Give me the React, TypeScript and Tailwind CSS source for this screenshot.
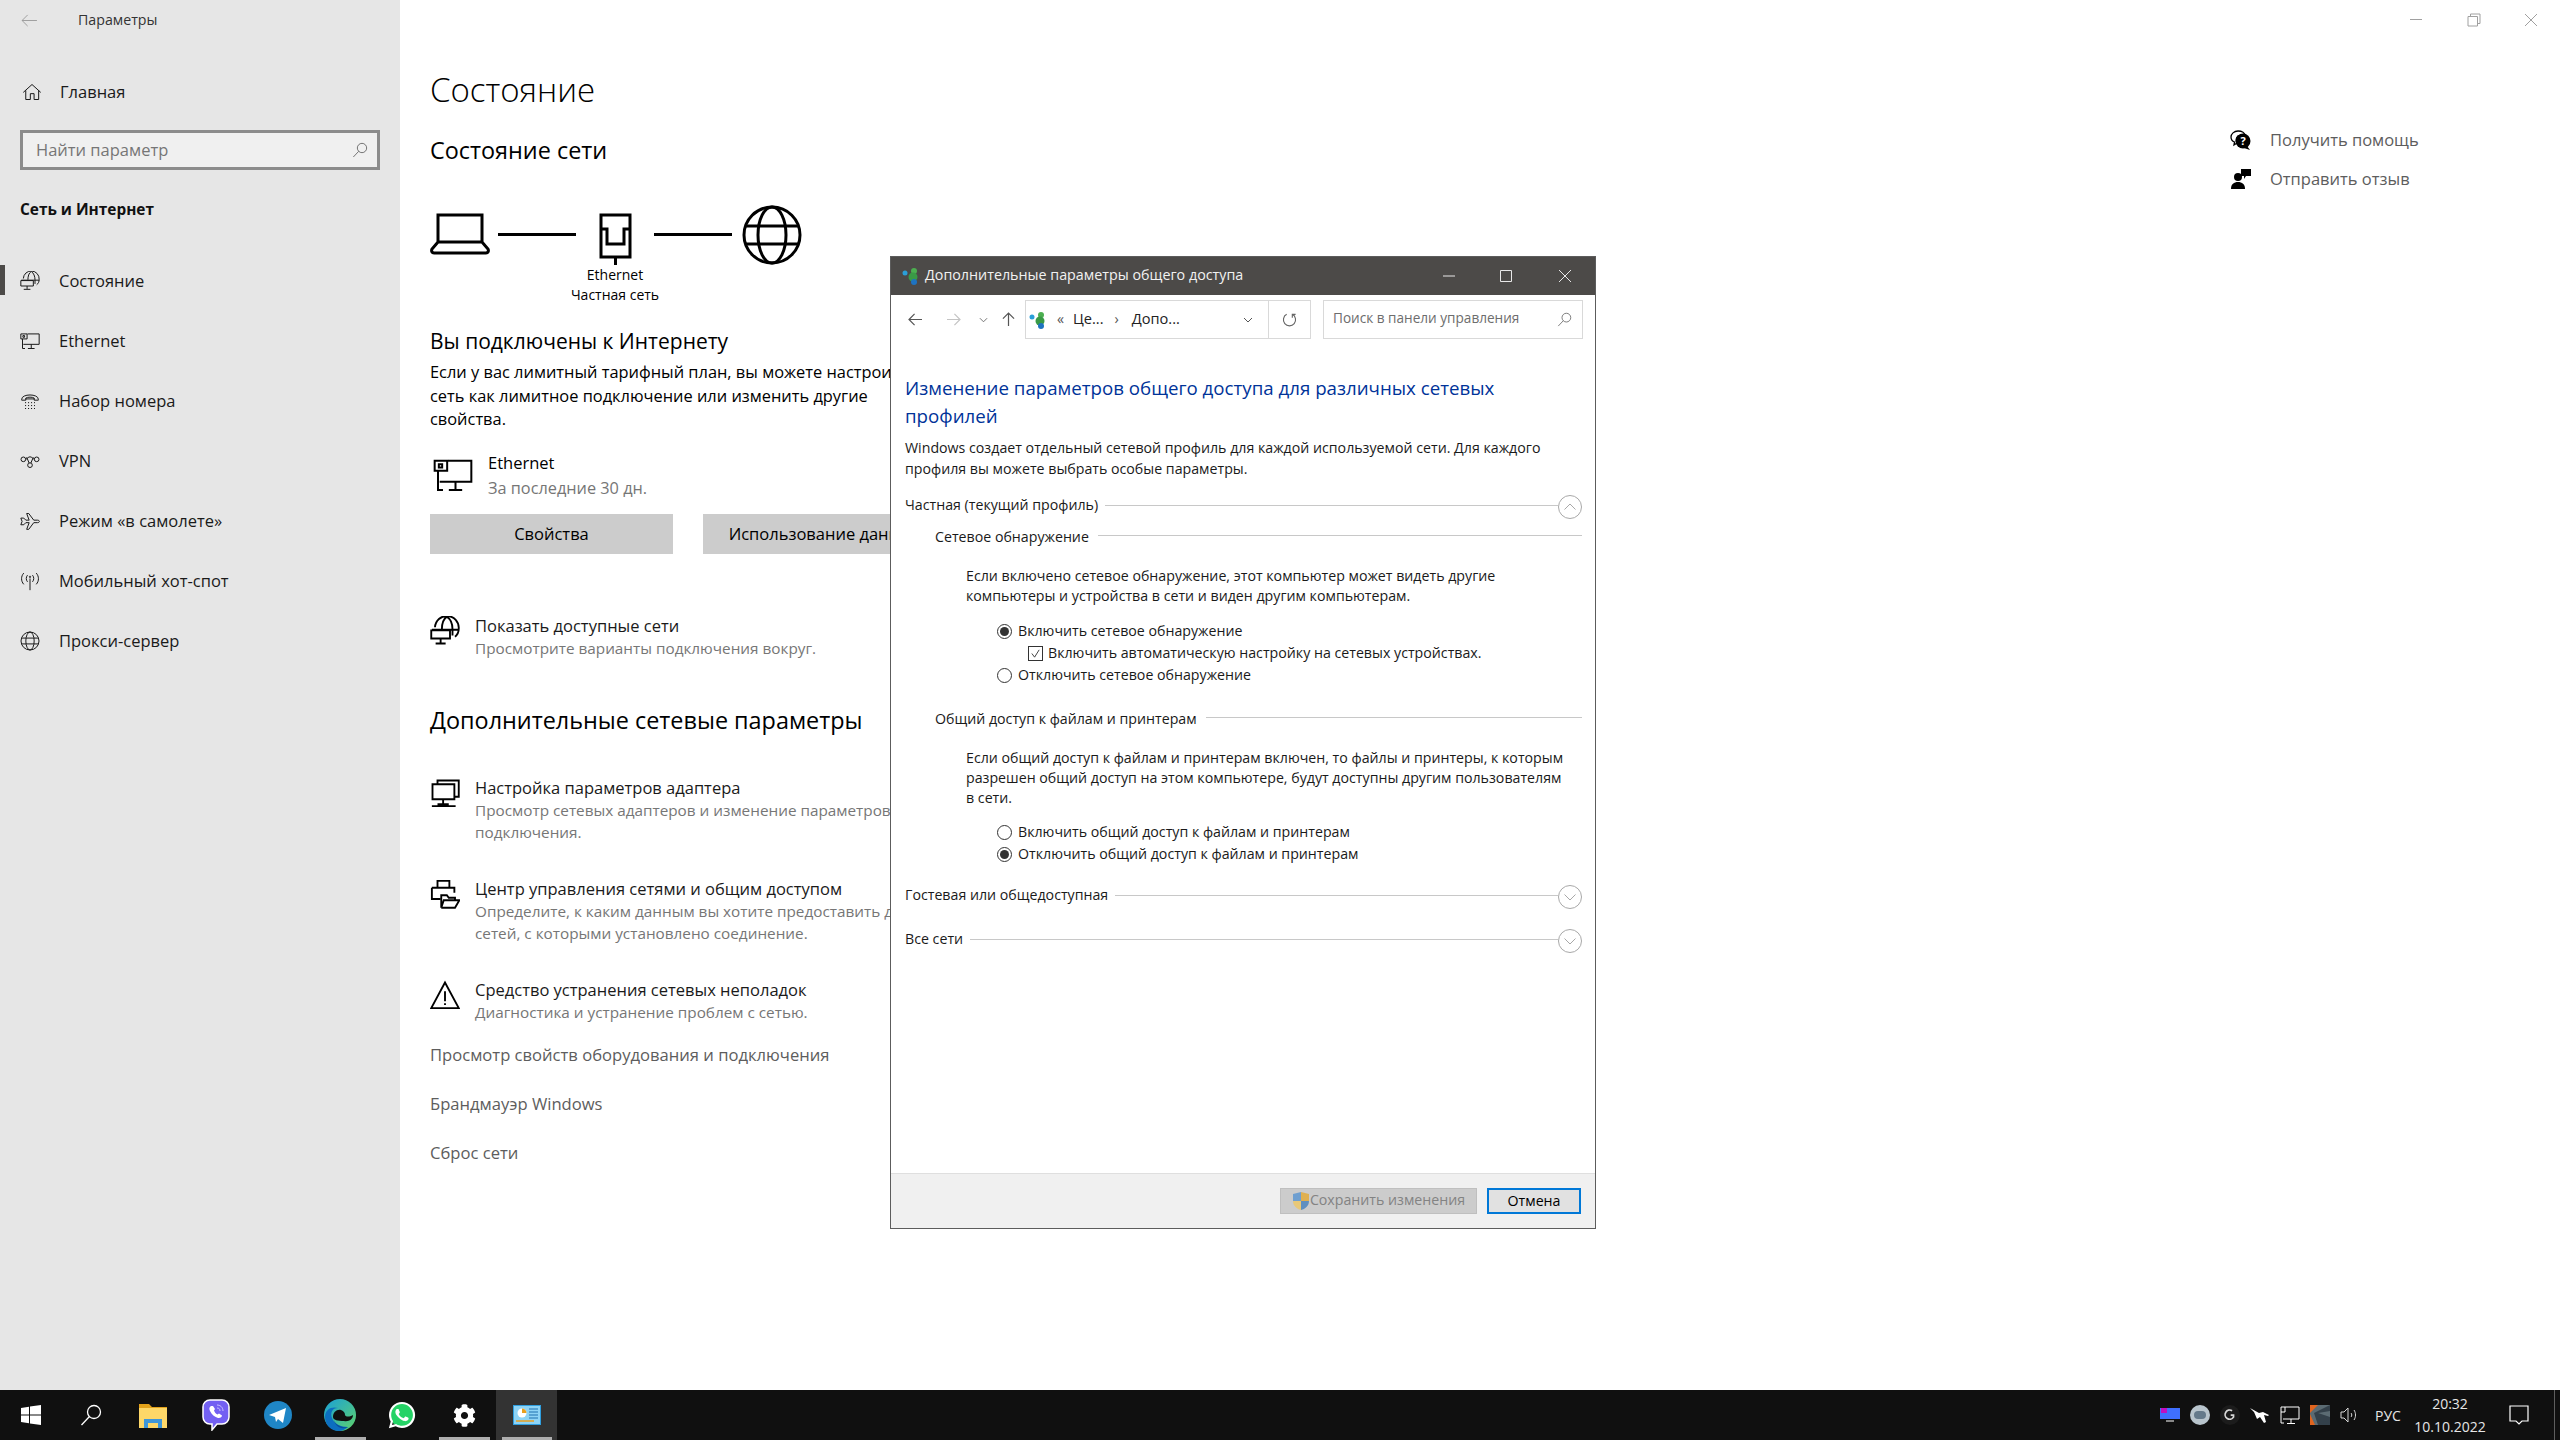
import { FaWhatsapp, FaCog } from "react-icons/fa";

type IconProps = { className?: string };

// sidebar and page glyphs, all drawn on a 24 grid with thin strokes
function Line({ className, children }: IconProps & { children: React.ReactNode }) {
  return (
    <svg viewBox="0 0 24 24" fill="none" stroke="currentColor" strokeWidth="1.2" className={className}>
      {children}
    </svg>
  );
}

const HomeIcon = (p: IconProps) => (
  <Line {...p}>
    <path d="M1.5 12.5 12 3l10.5 9.5M4.5 10v11h5.5v-7h4.5v7h5.5V10" />
  </Line>
);
const GlobeIcon = (p: IconProps) => (
  <Line {...p}>
    <circle cx="12" cy="12" r="10.8" />
    <ellipse cx="12" cy="12" rx="5" ry="10.8" />
    <path d="M1.8 8.5h20.4M1.8 15.5h20.4" />
  </Line>
);
const StatusIcon = (p: IconProps) => (
  <Line {...p}>
    <path d="M4 9a9.5 9.5 0 0 1 19 1c0 3-1 5-3 6.500M1.500 11h21.500M13.500 .5c-3 2-4 6-4 10M13.500 .5c3 2 4.500 6 4.500 10v5" />
    <path d="M1 11.500h15v6.500H1zM8.500 18v3.500M4.500 22h8" />
  </Line>
);
const EthernetIcon = (p: IconProps) => (
  <Line {...p}>
    <path d="M9 3.500h14v12.500H4M13.500 16v4.500M9.500 21h8M3 9.500V21h3" />
    <path d="M1 3.500h7.500v6H1zM3.500 5.500h2v2h-2z" />
  </Line>
);
const DialIcon = (p: IconProps) => (
  <Line {...p}>
    <path d="M2 10c0-7 20-7 20 0v1h-5V8.500c-2-1.500-8-1.500-10 0V11H2zM6.500 9.500h11" />
    <path strokeDasharray="1.300 2.300" d="M6 14h12M6 17.500h12M6 21h12" />
  </Line>
);
const VpnIcon = (p: IconProps) => (
  <Line {...p}>
    <circle cx="4" cy="10" r="2.800" />
    <circle cx="20" cy="10" r="2.800" />
    <circle cx="12" cy="17" r="2.800" />
    <path d="M6.800 10c2.500-1 3-3 5.200-3s3 2 5.400 3M11 14.500 8 7.500M13 14.500l3-7" />
  </Line>
);
const PlaneIcon = (p: IconProps) => (
  <Line {...p}>
    <path d="M1 8.500h3.500l2.500 2.500h4L8 3h2.500l6 8H21c3 0 3 3 0 3h-4.500l-6 8H8l3-8H7l-2.500 2.500H1l1.500-4z" />
  </Line>
);
const HotspotIcon = (p: IconProps) => (
  <Line {...p}>
    <path d="M12 9v14M9 5c-2 2.500-2 5.500 0 8M15 5c2 2.500 2 5.500 0 8M4.500 2.500c-3.500 4-3.500 9.500 0 13.500M19.500 2.500c3.500 4 3.500 9.500 0 13.500" />
    <circle cx="12" cy="7" r=".8" />
  </Line>
);
const AdapterIcon = (p: IconProps) => (
  <Line {...p}>
    <path d="M6 5V2h17v13h-3.500" />
    <path d="M2 5h17.500v12H2zM10.500 17v3.500M1.500 22.500h19M6 21h9" />
  </Line>
);
const ShareIcon = (p: IconProps) => (
  <Line {...p}>
    <path d="M6 7V1.500h9.500V7M1.500 7h18v4M1.500 7v9h7" />
    <path d="M9 13h4.500l1.500 2h5v2H11l-2 6zM9 23h11l3.500-6H20" />
  </Line>
);
const WarnIcon = (p: IconProps) => (
  <Line {...p}>
    <path d="M12 2 1 22.500h22z" />
    <path d="M12 9v8M12 18.500v1.500" strokeWidth="1.500" />
  </Line>
);
const SearchGlyph = (p: IconProps) => (
  <Line {...p}>
    <circle cx="15" cy="9" r="7" />
    <path d="M10 14 2 22.500" />
  </Line>
);

function ChevronCircle({ up }: { up?: boolean }) {
  return (
    <svg viewBox="0 0 24 24" fill="none" className="relative top-[2px] h-6 w-6 shrink-0 text-[#a8a8a8]" stroke="currentColor">
      <circle cx="12" cy="12" r="11.500" />
      <path d={up ? "M6.500 14.500 12 9l5.500 5.500" : "M6.500 9.500 12 15l5.500-5.500"} />
    </svg>
  );
}

function NetDots({ className }: IconProps) {
  return (
    <svg viewBox="0 0 18 18" className={className}>
      <circle cx="3" cy="6" r="2.500" fill="#2a9fd8" />
      <circle cx="12" cy="4" r="3" fill="#4caf50" />
      <circle cx="11" cy="10" r="4.500" fill="#3a9a46" />
      <circle cx="12" cy="15" r="3" fill="#1e73c0" />
    </svg>
  );
}

function SideRow({ icon, label, active }: { icon: React.ReactNode; label: string; active?: boolean }) {
  return (
    <div className="relative flex h-[60px] items-center pl-[20px] text-[16.5px] text-[#1a1a1a]">
      {active && <span className="absolute left-0 top-[14px] h-[30px] w-[5px] bg-[#4c4a48]" />}
      <span className="flex w-[39px] shrink-0">{icon}</span>
      <span className="pt-px">{label}</span>
    </div>
  );
}

function Sidebar() {
  const ic = "h-5 w-5 text-[#1a1a1a]";
  return (
    <aside className="flex w-[400px] shrink-0 flex-col bg-[#e6e6e6]">
      <div className="flex h-[40px] items-center pl-[21px] text-[14.2px] text-[#333]">
        <svg viewBox="0 0 18 14" fill="none" stroke="#9b9b9b" className="h-[13px] w-[17px]">
          <path d="M17 7H1M7 1 1 7l6 6" />
        </svg>
        <span className="ml-[40px]">Параметры</span>
      </div>
      <div className="mt-[22px] flex h-[60px] items-center pl-[22px] text-[16.5px] text-[#1a1a1a]">
        <span className="flex w-[38px] shrink-0"><HomeIcon className={ic} /></span>
        Главная
      </div>
      <div className="mx-5 mt-[8px] flex h-[40px] items-center justify-between border-[3px] border-[#8c8c8c] bg-[#f0f0f0] pl-[13px] pr-[9px] text-[16.5px] text-[#767676]">
        Найти параметр
        <SearchGlyph className="h-[16px] w-[16px] text-[#555]" />
      </div>
      <div className="mt-[22px] flex h-[34px] items-center pl-5 pt-px text-[15.4px] font-bold text-[#111]">Сеть и Интернет</div>
      <div className="mt-[25px]">
        <SideRow active label="Состояние" icon={<StatusIcon className={ic} />} />
        <SideRow label="Ethernet" icon={<EthernetIcon className={ic} />} />
        <SideRow label="Набор номера" icon={<DialIcon className={ic} />} />
        <SideRow label="VPN" icon={<VpnIcon className={ic} />} />
        <SideRow label="Режим «в самолете»" icon={<PlaneIcon className={ic} />} />
        <SideRow label="Мобильный хот-спот" icon={<HotspotIcon className={ic} />} />
        <SideRow label="Прокси-сервер" icon={<GlobeIcon className={ic} />} />
      </div>
    </aside>
  );
}

function OptionRow({ icon, title, lines, className }: { icon: React.ReactNode; title: string; lines: string[]; className: string }) {
  return (
    <div className={`flex ${className}`}>
      <span className="flex w-[45px] shrink-0 pt-[2px] text-black">{icon}</span>
      <div className="whitespace-nowrap">
        <div className="flex h-[24px] items-center pt-px text-[16.5px] text-[#1a1a1a]">{title}</div>
        {lines.map((l) => (
          <div key={l} className="flex h-[22px] items-center text-[15.3px] text-[#767676]">{l}</div>
        ))}
      </div>
    </div>
  );
}

function StatusColumn() {
  const big = "h-[30px] w-[30px] [stroke-width:1.5]";
  return (
    <div className="pl-[30px] text-black">
      <h1 className="mt-[26px] flex h-[48px] items-center text-[33px] font-light">Состояние</h1>
      <h2 className="mt-[19px] flex h-[34px] items-center pt-px text-[23.4px]">Состояние сети</h2>

      <div className="mt-[38px] flex h-[101px] items-start">
        <svg viewBox="0 0 60 42" fill="none" stroke="black" strokeWidth="3" className="mt-2 h-[42px] w-[60px]">
          <path d="M8 29V2h44v27M8 29 2 36c-1 2 0 4 2 4h52c2 0 3-2 2-4l-6-7z" />
        </svg>
        <span className="ml-2 mt-[28px] h-[3px] w-[78px] bg-black" />
        <div className="flex w-[78px] flex-col items-center whitespace-nowrap text-[14px] leading-[20px]">
          <svg viewBox="0 0 33 52" fill="none" stroke="black" strokeWidth="3" className="mt-2 h-[52px] w-[33px]">
            <path d="M2 2h29v42H2zM2 16h6v15h17V16h6M16.500 44v8" />
          </svg>
          <span>Ethernet</span>
          <span>Частная сеть</span>
        </div>
        <span className="mt-[28px] h-[3px] w-[78px] bg-black" />
        <svg viewBox="0 0 60 60" fill="none" stroke="black" strokeWidth="3" className="ml-[10px] h-[60px] w-[60px]">
          <circle cx="30" cy="30" r="28" />
          <ellipse cx="30" cy="30" rx="14" ry="28" />
          <path d="M4 21h52M4 39h52" />
        </svg>
      </div>

      <h3 className="mt-[21px] flex h-[30px] items-center text-[21px]">Вы подключены к Интернету</h3>
      <p className="mt-[3px] whitespace-nowrap text-[16.4px] leading-[23.5px]">
        Если у вас лимитный тарифный план, вы можете настроить эту
        <br />
        сеть как лимитное подключение или изменить другие
        <br />
        свойства.
      </p>

      <div className="mt-[20px] flex">
        <EthernetIcon className="ml-[3px] mt-[4px] h-[40px] w-[40px] text-black" />
        <div className="ml-[15px]">
          <div className="flex h-[24px] items-center pt-px text-[16.5px]">Ethernet</div>
          <div className="flex h-[26px] items-center pt-[2px] text-[16.3px] text-[#767676]">За последние 30 дн.</div>
        </div>
      </div>

      <div className="mt-[13px] flex gap-[30px] text-[16.5px]">
        <button className="h-[40px] w-[243px] bg-[#cccccc] pt-[2px]">Свойства</button>
        <button className="h-[40px] w-[243px] bg-[#cccccc] pt-[2px]">Использование данных</button>
      </div>

      <OptionRow className="mt-[60px]" icon={<StatusIcon className={big} />} title="Показать доступные сети" lines={["Просмотрите варианты подключения вокруг."]} />

      <h2 className="mt-[44px] flex h-[34px] items-center text-[23.4px]">Дополнительные сетевые параметры</h2>

      <OptionRow className="mt-[38px]" icon={<AdapterIcon className={big} />} title="Настройка параметров адаптера" lines={["Просмотр сетевых адаптеров и изменение параметров", "подключения."]} />
      <OptionRow className="mt-[33px]" icon={<ShareIcon className={big} />} title="Центр управления сетями и общим доступом" lines={["Определите, к каким данным вы хотите предоставить доступ для", "сетей, с которыми установлено соединение."]} />
      <OptionRow className="mt-[33px]" icon={<WarnIcon className={big} />} title="Средство устранения сетевых неполадок" lines={["Диагностика и устранение проблем с сетью."]} />

      <div className="mt-[19px] flex flex-col gap-[25px] text-[16.6px] text-[#5d5d5d]">
        <span className="h-[24px] leading-[24px]">Просмотр свойств оборудования и подключения</span>
        <span className="h-[24px] leading-[24px]">Брандмауэр Windows</span>
        <span className="h-[24px] leading-[24px]">Сброс сети</span>
      </div>
    </div>
  );
}

function HelpColumn() {
  return (
    <div className="w-[330px] pt-[88px] text-[16.5px] text-[#5d5d5d]">
      <div className="flex h-[24px] items-center">
        <svg viewBox="0 0 22 22" className="h-[22px] w-[22px]">
          <path d="M8 2c4 0 7 2 7 5H8c-2 2-2 5-1 7l-3 2 .500-3C2 12 1 10 1 8c0-3 3-6 7-6z" fill="none" stroke="black" strokeWidth="1.300" />
          <circle cx="13" cy="12" r="7.500" fill="black" />
          <path d="m17 17 3 4-6-2z" fill="black" />
          <text x="13" y="16" textAnchor="middle" fontSize="11" fontWeight="700" fill="white">?</text>
        </svg>
        <span className="ml-[18px]">Получить помощь</span>
      </div>
      <div className="mt-[15px] flex h-[24px] items-center">
        <svg viewBox="0 0 22 22" className="h-[22px] w-[22px]">
          <circle cx="8" cy="9" r="4" fill="black" />
          <path d="M1 21c0-5 3-7 7-7s7 2 7 7z" fill="black" />
          <path d="M11 1h10v7h-5l-2 3V8h-3z" fill="black" />
        </svg>
        <span className="ml-[18px]">Отправить отзыв</span>
      </div>
    </div>
  );
}

function Radio({ on }: { on?: boolean }) {
  return (
    <span className="flex h-[15px] w-[15px] shrink-0 items-center justify-center rounded-full border border-[#333]">
      {on && <span className="h-[9px] w-[9px] rounded-full bg-[#333]" />}
    </span>
  );
}

function RadioRow({ on, label }: { on?: boolean; label: string }) {
  return (
    <div className="ml-[92px] flex h-[22px] items-center gap-[6px]">
      <Radio on={on} />
      {label}
    </div>
  );
}

function SectionRow({ label, up, className }: { label: string; up?: boolean; className: string }) {
  return (
    <div className={`flex h-[24px] items-center ${className}`}>
      {label}
      <span className="ml-[7px] h-px flex-1 bg-[#c8c8c8]" />
      <ChevronCircle up={up} />
    </div>
  );
}

function SubHead({ label, className }: { label: string; className: string }) {
  return (
    <div className={`ml-[30px] flex h-[20px] items-center ${className}`}>
      {label}
      <span className="relative top-[-2px] ml-[9px] h-px flex-1 bg-[#c8c8c8]" />
    </div>
  );
}

function SharingDialog() {
  return (
    <div className="absolute left-[490px] top-[256px] flex h-[973px] w-[706px] flex-col border border-[#5c5c5c] bg-white text-[14.2px] text-[#1a1a1a]">
      <div className="flex h-[38px] shrink-0 items-center bg-[#4c4a48] pl-[11px] text-[14.3px] text-[#f2f2f2]">
        <NetDots className="h-[18px] w-[18px]" />
        <span className="ml-[5px] flex-1 pb-[2px]">Дополнительные параметры общего доступа</span>
        <svg viewBox="0 0 16 16" fill="none" stroke="#e8e8e8" className="mr-[41px] h-[16px] w-[16px]"><path d="M2 8h12" /></svg>
        <svg viewBox="0 0 16 16" fill="none" stroke="#e8e8e8" className="mr-[43px] h-[16px] w-[16px]"><path d="M2.500 2.500h11v11h-11z" /></svg>
        <svg viewBox="0 0 16 16" fill="none" stroke="#e8e8e8" className="mr-[22px] h-[16px] w-[16px]"><path d="m2 2 12 12M14 2 2 14" /></svg>
      </div>

      <div className="flex h-[49px] shrink-0 items-center pl-[5px]">
        <span className="flex w-[38px] justify-center">
          <svg viewBox="0 0 16 14" fill="none" stroke="#555" strokeWidth="1.300" className="h-[13px] w-[15px]"><path d="M15 7H1M7 1 1 7l6 6" /></svg>
        </span>
        <span className="flex w-[39px] justify-center">
          <svg viewBox="0 0 16 14" fill="none" stroke="#c4c4c4" strokeWidth="1.300" className="h-[13px] w-[15px]"><path d="M1 7h14M9 1l6 6-6 6" /></svg>
        </span>
        <span className="flex w-[20px] justify-center">
          <svg viewBox="0 0 10 6" fill="none" stroke="#666" className="h-[6px] w-[9px]"><path d="m1 1 4 4 4-4" /></svg>
        </span>
        <span className="flex w-[28px] justify-center pl-[2px]">
          <svg viewBox="0 0 14 16" fill="none" stroke="#555" strokeWidth="1.300" className="h-[15px] w-[13px]"><path d="M7 15V1M1 7l6-6 6 6" /></svg>
        </span>
        <div className="ml-[4px] flex h-[39px] w-[286px] items-center border border-[#d9d9d9] pl-[3px] text-[#222]">
          <NetDots className="h-[18px] w-[18px]" />
          <span className="ml-[10px] pb-[2px] text-[#555]">«</span>
          <span className="ml-[9px] pb-[2px] text-[14.6px]">Це...</span>
          <span className="ml-[11px] pb-[2px] text-[#555]">›</span>
          <span className="ml-[13px] pb-[2px] text-[14.6px]">Допо...</span>
          <svg viewBox="0 0 10 6" fill="none" stroke="#555" className="ml-auto mr-[15px] h-[6px] w-[10px]"><path d="m1 1 4 4 4-4" /></svg>
          <span className="flex h-full w-[42px] items-center justify-center border-l border-[#d9d9d9]">
            <svg viewBox="0 0 16 16" fill="none" stroke="#666" strokeWidth="1.200" className="h-[15px] w-[15px]">
              <path d="M11 2.500a6.500 6.500 0 1 1-6 0M11 6V2.500h3.500" />
            </svg>
          </span>
        </div>
        <div className="ml-[12px] flex h-[39px] w-[260px] items-center justify-between border border-[#d9d9d9] pl-[9px] pr-[10px] text-[13.6px] text-[#6d6d6d]">
          <span className="pb-[2px]">Поиск в панели управления</span>
          <SearchGlyph className="h-[15px] w-[15px] text-[#555]" />
        </div>
      </div>

      <div className="flex-1 pl-[14px] pr-[13px]">
        <h1 className="mt-[30px] text-[18.7px] leading-[28px] text-[#003399]">
          Изменение параметров общего доступа для различных сетевых
          <br />
          профилей
        </h1>
        <p className="mt-[7px] leading-[21px]">
          Windows создает отдельный сетевой профиль для каждой используемой сети. Для каждого
          <br />
          профиля вы можете выбрать особые параметры.
        </p>

        <SectionRow className="mt-[14px]" up label="Частная (текущий профиль)" />
        <SubHead className="mt-[10px]" label="Сетевое обнаружение" />
        <p className="ml-[61px] mt-[19px] leading-[20px]">
          Если включено сетевое обнаружение, этот компьютер может видеть другие
          <br />
          компьютеры и устройства в сети и виден другим компьютерам.
        </p>
        <div className="mt-[14px]">
          <RadioRow on label="Включить сетевое обнаружение" />
          <div className="ml-[123px] flex h-[22px] items-center gap-[5px]">
            <span className="flex h-[15px] w-[15px] shrink-0 items-center justify-center border border-[#333]">
              <svg viewBox="0 0 12 12" fill="none" stroke="#333" className="h-[11px] w-[11px]"><path d="m2 6 3 4 5-8" /></svg>
            </span>
            Включить автоматическую настройку на сетевых устройствах.
          </div>
          <RadioRow label="Отключить сетевое обнаружение" />
        </div>

        <SubHead className="mt-[23px]" label="Общий доступ к файлам и принтерам" />
        <p className="ml-[61px] mt-[19px] leading-[20px]">
          Если общий доступ к файлам и принтерам включен, то файлы и принтеры, к которым
          <br />
          разрешен общий доступ на этом компьютере, будут доступны другим пользователям
          <br />в сети.
        </p>
        <div className="mt-[13px]">
          <RadioRow label="Включить общий доступ к файлам и принтерам" />
          <RadioRow on label="Отключить общий доступ к файлам и принтерам" />
        </div>

        <SectionRow className="mt-[18px]" label="Гостевая или общедоступная" />
        <SectionRow className="mt-[20px]" label="Все сети" />
      </div>

      <div className="flex h-[55px] shrink-0 items-center justify-end gap-[10px] border-t border-[#dfdfdf] bg-[#f0f0f0] pr-[14px]">
        <button className="flex h-[26px] w-[197px] items-center justify-center border border-[#bfbfbf] bg-[#cccccc] text-[#838383]">
          <svg viewBox="0 0 18 20" className="h-[20px] w-[18px]">
            <path d="M9 1 1 3v7h8z" fill="#6f9fd0" />
            <path d="M9 1l8 2v7H9z" fill="#e0b050" />
            <path d="M1 10h8v9c-4-1-8-4-8-9z" fill="#e8c878" />
            <path d="M9 10h8c0 5-4 8-8 9z" fill="#5f8fc0" />
          </svg>
          <span className="pb-[2px]">Сохранить изменения</span>
        </button>
        <button className="h-[26px] w-[94px] border-2 border-[#0078d7] bg-[#e1e1e1] pb-[2px] text-black">Отмена</button>
      </div>
    </div>
  );
}

function TaskSlot({ w, children, active, open }: { w: string; children: React.ReactNode; active?: boolean; open?: boolean }) {
  return (
    <div className={`relative flex h-full items-center justify-center ${w} ${active ? "bg-[#333333]" : ""}`}>
      {children}
      {open && <span className="absolute bottom-0 left-[6px] right-[5px] h-[3px] bg-[#aeaeae]" />}
    </div>
  );
}

function Taskbar() {
  return (
    <footer className="flex h-[50px] shrink-0 items-center bg-[#101010] text-white">
      <TaskSlot w="w-[61px]">
        <svg viewBox="0 0 20 20" fill="white" className="h-[20px] w-[20px]">
          <path d="M0 3l8-1.200v7.700H0zM9 1.600 20 0v9.500H9zM0 10.500h8v7.700l-8-1.200zM9 10.500h11V20L9 18.400z" />
        </svg>
      </TaskSlot>
      <TaskSlot w="w-[60px]">
        <svg viewBox="0 0 22 22" fill="none" stroke="white" strokeWidth="1.300" className="h-[22px] w-[22px]">
          <circle cx="14" cy="8" r="6.500" />
          <path d="M9.500 12.500 1.500 21" />
        </svg>
      </TaskSlot>
      <TaskSlot w="w-[64px]">
        <svg viewBox="0 0 28 26" className="h-[26px] w-[28px]">
          <path d="M0 2h10l3 3h15v21H0z" fill="#e3a21a" />
          <path d="M0 6h28v20H0z" fill="#fdd768" />
          <path d="M5 17h18v9h-4v-5H9v5H5z" fill="#3f96d8" />
        </svg>
      </TaskSlot>
      <TaskSlot w="w-[62px]">
        <svg viewBox="0 0 28 32" className="h-[32px] w-[28px]">
          <path d="M8 1h12c4 0 7 3 7 7v10c0 4-3 7-7 7h-5l-5 6v-6H8c-4 0-7-3-7-7V8c0-4 3-7 7-7z" fill="#7360f2" stroke="white" strokeWidth="1.500" />
          <path d="M9 7c-2 1-2 3-1 5 2 4 5 6 8 7 2 .500 4-1 4-2.500l-3-2-1.500 1c-2-1-3-2.500-3.500-4l1-1.500-2-3z" fill="white" />
          <path d="M15 6c3 0 6 2 6 6M15 9c2 0 3 1 3 3" fill="none" stroke="#c9c0ff" />
        </svg>
      </TaskSlot>
      <TaskSlot w="w-[62px]">
        <svg viewBox="0 0 28 28" className="h-[28px] w-[28px]">
          <circle cx="14" cy="14" r="14" fill="#1f86c6" />
          <path d="M5 14 22 7l-3 15-5-4-2 3-1-5z" fill="white" />
        </svg>
      </TaskSlot>
      <TaskSlot w="w-[62px]" open>
        <svg viewBox="0 0 32 32" className="h-[32px] w-[32px]">
          <defs>
            <linearGradient id="edgeGreen" x1="0" y1="0" x2="1" y2="1">
              <stop offset="0" stopColor="#1aa0d8" />
              <stop offset="1" stopColor="#5fd36a" />
            </linearGradient>
          </defs>
          <circle cx="16" cy="16" r="16" fill="url(#edgeGreen)" />
          <path d="M1 18C1 10 8 7 14 9c-6 0-8 5-6 10 2 6 9 9 16 9-3 2.500-6 4-9 4C7 32 1 26 1 18z" fill="#0c6fc0" />
          <path d="M9 18c0-5 4-8 8-7 3 1 4 3 4 5 0 1 3 3 8 0 0 4-4 7-9 6-6 0-11-1-11-4z" fill="#101010" />
          <path d="M9 18c1 7 7 11 15 10-6 3-13 1-15-10z" fill="#0a4f9c" />
        </svg>
      </TaskSlot>
      <TaskSlot w="w-[62px]">
        <span className="relative flex h-[30px] w-[30px] items-center justify-center">
          <span className="absolute inset-[3px] rounded-full bg-[#25d366]" />
          <FaWhatsapp className="relative h-[30px] w-[30px] text-white" />
        </span>
      </TaskSlot>
      <TaskSlot w="w-[62px]" open>
        <FaCog className="h-[23px] w-[23px] text-white" />
      </TaskSlot>
      <div className="ml-px h-full">
        <TaskSlot w="w-[61px]" active open>
          <svg viewBox="0 0 28 20" className="h-[20px] w-[28px]">
            <path d="M0 0h28v20H0z" fill="#2f9fe0" />
            <path d="M1 1h26v18H1z" fill="#8ed4f6" />
            <circle cx="9" cy="8" r="4.500" fill="white" />
            <path d="M9 8V3.500A4.500 4.500 0 0 1 13.500 8z" fill="#e8a020" />
            <path d="M16 4h9M16 7h9M16 10h9M16 13h9" stroke="#1e70b0" />
            <path d="M3 16h18" stroke="#e8a020" strokeWidth="1.500" />
          </svg>
        </TaskSlot>
      </div>

      <div className="ml-auto flex h-full items-center text-[#e6e6e6]">
        <svg viewBox="0 0 20 16" className="h-[16px] w-[20px]">
          <path d="M0 1h20v11H0z" fill="#3f6fff" />
          <path d="M1 1h6v5H1z" fill="#c010c0" />
          <path d="M6 13h8v2H6z" fill="#888" />
        </svg>
        <span className="ml-[10px] flex h-[20px] w-[20px] items-center justify-center rounded-full bg-[#b8c4cc]">
          <span className="h-[8px] w-[12px] rounded-full bg-[#64798a]" />
        </span>
        <span className="ml-[10px] flex h-[20px] w-[20px] items-center justify-center rounded-full bg-[#1c1c1c]">
          <svg viewBox="0 0 20 20" fill="none" stroke="#d8d8d8" strokeWidth="2.500" className="h-[14px] w-[14px]">
            <path d="M13 4a6.500 6.500 0 1 0 2 9v-3h-4" />
          </svg>
        </span>
        <svg viewBox="0 0 20 16" fill="white" className="ml-[10px] h-[16px] w-[20px]">
          <path d="M0 1 9 6l4-1 6 3-1 1-4-1 2 7-2 1-4-6-3 2-3-7 3 3z" />
        </svg>
        <svg viewBox="0 0 20 20" fill="none" stroke="white" className="ml-[10px] h-[20px] w-[20px]">
          <path d="M5 2h14v12H3M11 14v4M7 18.500h8M1 7v11h3M1 2h4v5H1z" />
        </svg>
        <svg viewBox="0 0 20 20" className="ml-[10px] h-[20px] w-[20px]">
          <path d="M0 0h20v20H0z" fill="#5b6b73" />
          <path d="M0 8 8 0H0zM0 20V9l5 11z" fill="#e0641e" />
          <path d="M20 0v6L8 8l12 4v8H8L4 8z" fill="#33404a" />
        </svg>
        <svg viewBox="0 0 20 20" fill="none" stroke="#d8d8d8" className="ml-[10px] h-[20px] w-[20px]">
          <path d="M1 7h3l4-4v14l-4-4H1zM11 8c1 1 1 3 0 4M14 5c2 3 2 7 0 10" />
        </svg>
        <span className="ml-[13px] w-[30px] text-center text-[14px]">РУС</span>
        <div className="ml-[2px] flex w-[90px] flex-col items-center text-[14px] leading-[23px]">
          <span>20:32</span>
          <span>10.10.2022</span>
        </div>
        <svg viewBox="0 0 20 20" fill="none" stroke="white" strokeWidth="1.200" className="ml-[14px] h-[20px] w-[20px]">
          <path d="M1 1h18v15h-6l-3 3-3-3H1z" />
        </svg>
        <span className="ml-[25px] mr-[5px] h-full w-px bg-[#5e5e5e]" />
      </div>
    </footer>
  );
}

export default function App() {
  return (
    <div className="flex h-screen w-screen flex-col overflow-hidden bg-white font-['Open_Sans',sans-serif]">
      <div className="flex min-h-0 flex-1">
        <Sidebar />
        <main className="relative flex-1">
          <div className="flex h-[40px] items-center justify-end">
            <svg viewBox="0 0 14 14" fill="none" stroke="#a0a0a0" className="mr-[44px] h-[14px] w-[14px]"><path d="M1 6.500h12" /></svg>
            <svg viewBox="0 0 14 14" fill="none" stroke="#a0a0a0" className="mr-[43px] h-[14px] w-[14px]"><path d="M1 3.500h9.500v9.500H1zM3.500 3.500V1H13v9.500h-2.500" /></svg>
            <svg viewBox="0 0 14 14" fill="none" stroke="#a0a0a0" className="mr-[22px] h-[14px] w-[14px]"><path d="m1 1 12 12M13 1 1 13" /></svg>
          </div>
          <div className="flex justify-between">
            <StatusColumn />
            <HelpColumn />
          </div>
          <SharingDialog />
        </main>
      </div>
      <Taskbar />
    </div>
  );
}
